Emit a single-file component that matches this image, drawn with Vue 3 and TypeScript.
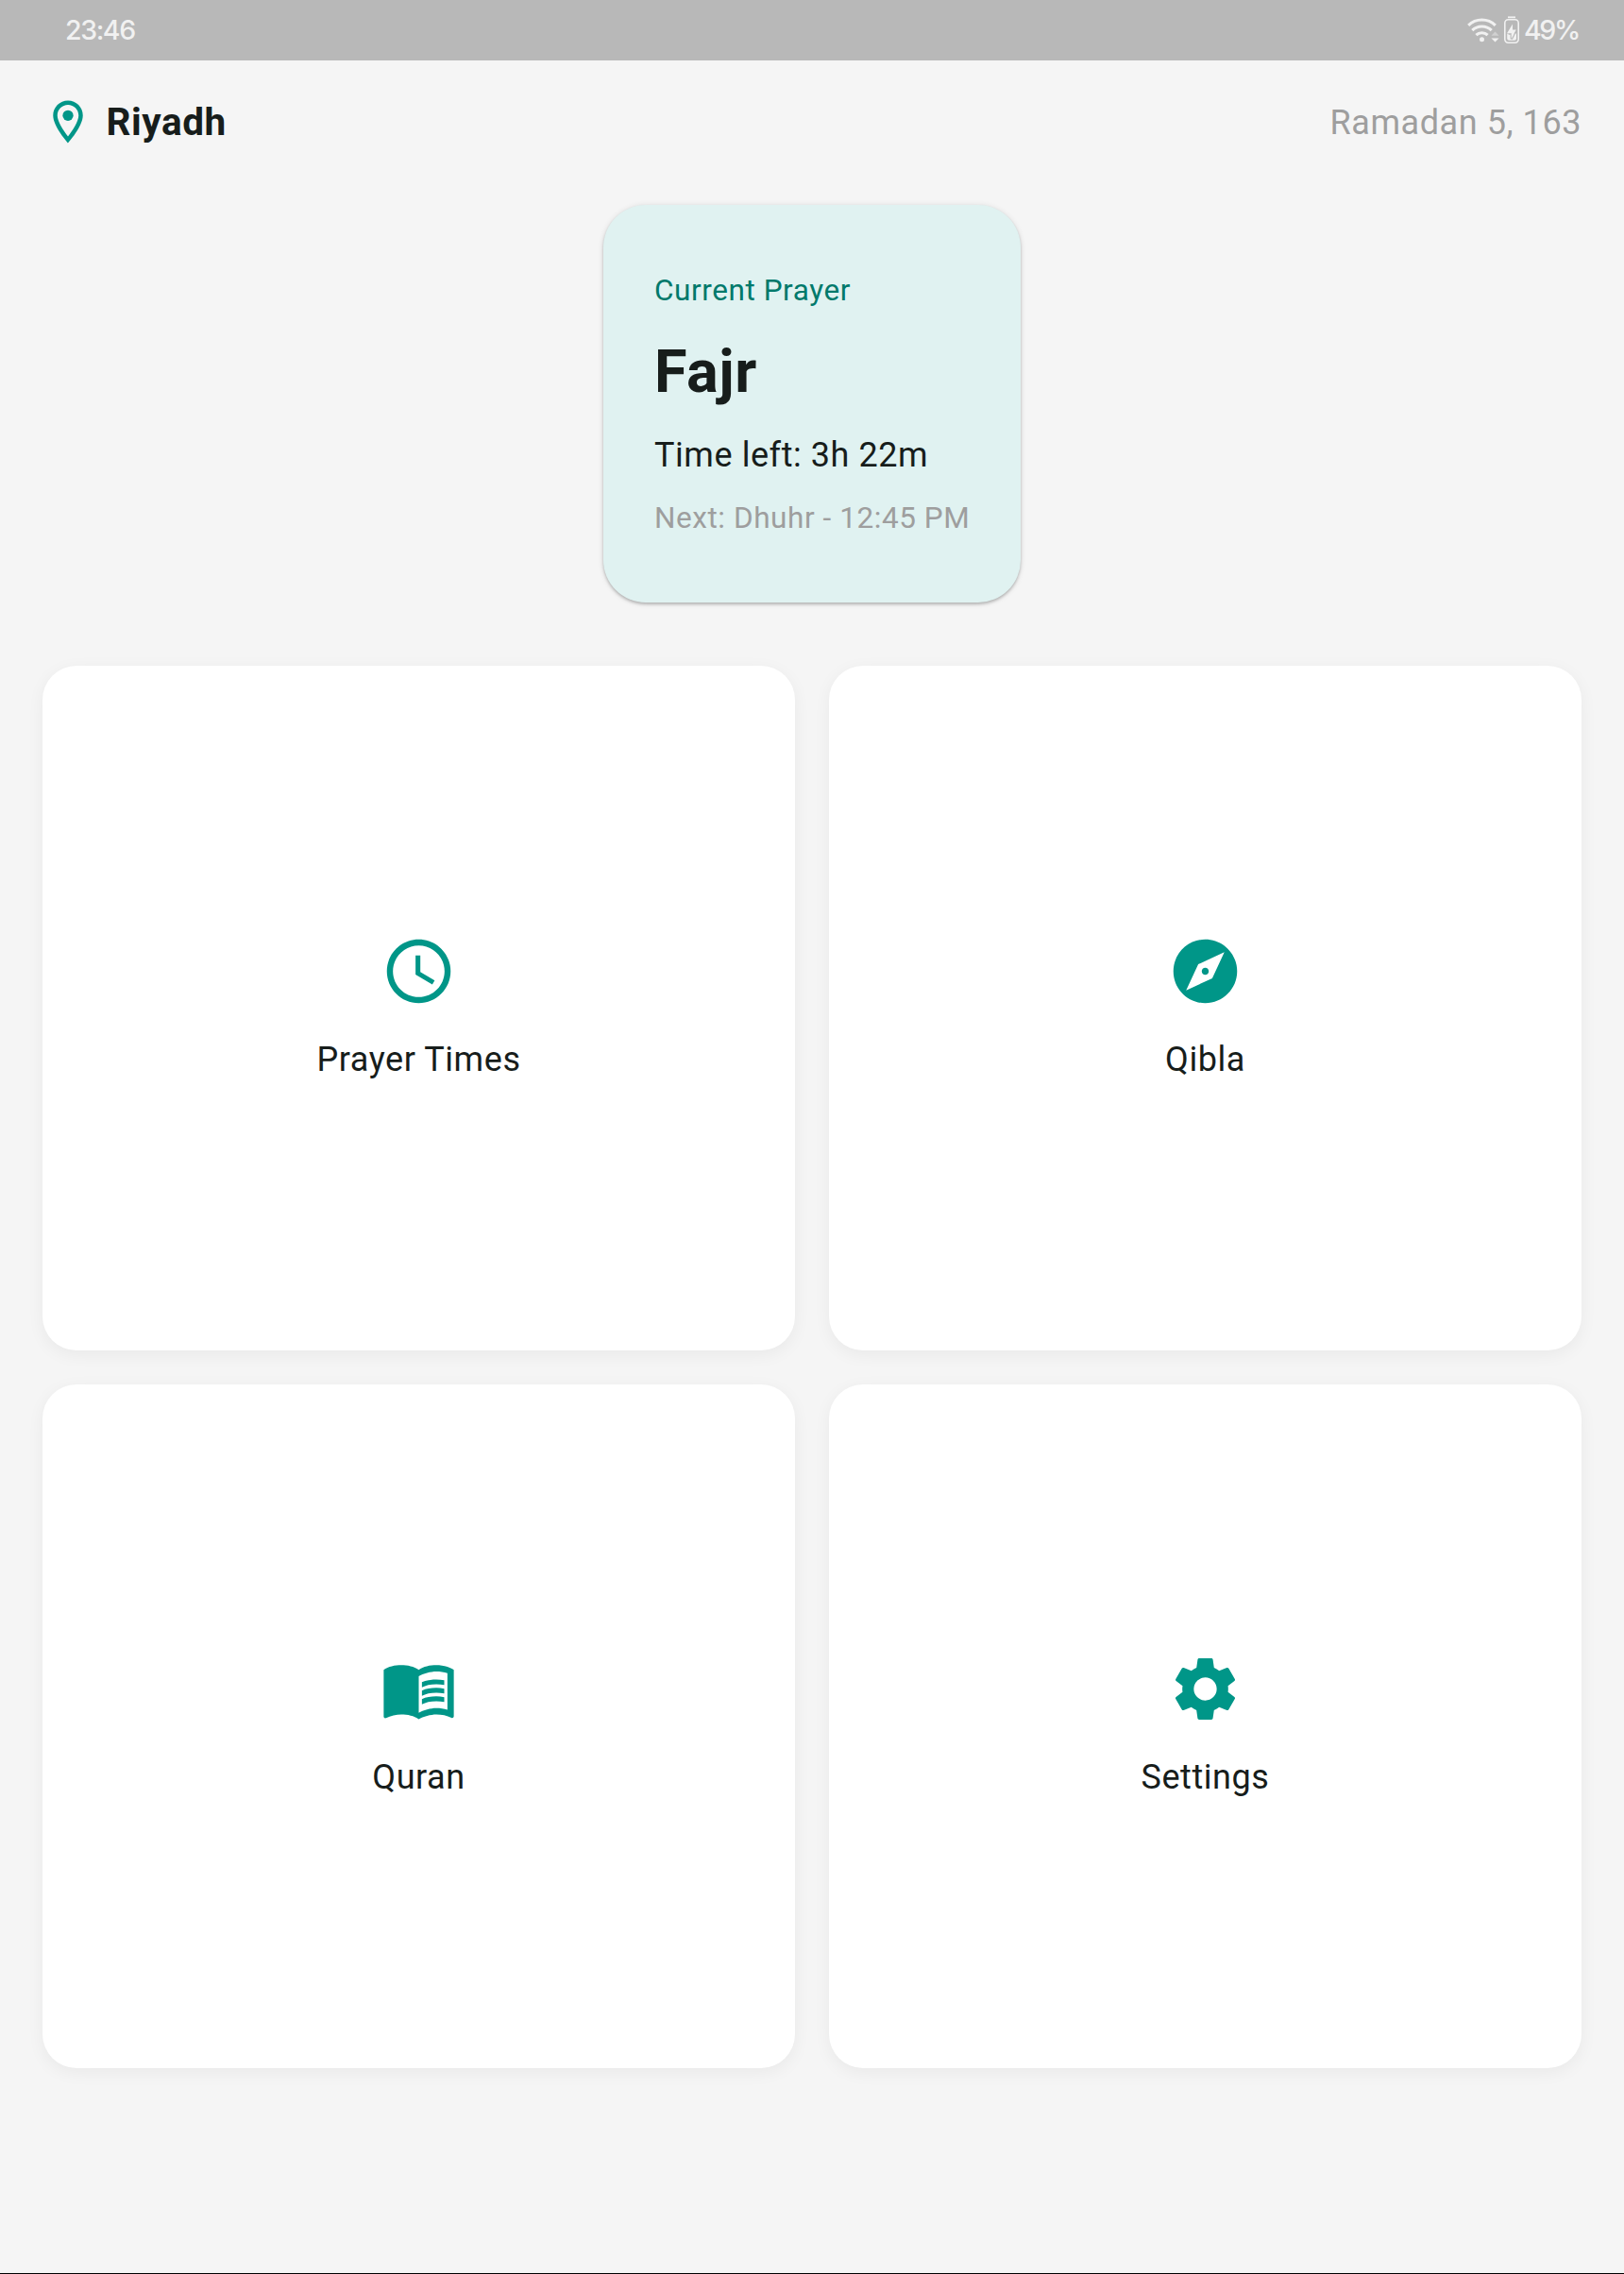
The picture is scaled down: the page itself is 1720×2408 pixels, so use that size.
<script setup lang="ts">
interface Tile {
  label: string
  icon: string
}

const tiles: Tile[] = [
  {
    label: 'Prayer Times',
    icon: 'M11.99 2C6.47 2 2 6.48 2 12s4.47 10 9.99 10C17.52 22 22 17.52 22 12S17.52 2 11.99 2zM12 20.1c-4.47 0-8.1-3.63-8.1-8.1S7.53 3.9 12 3.9s8.1 3.63 8.1 8.1-3.63 8.1-8.1 8.1zM12.5 7H11v6l5.25 3.15.75-1.23-4.5-2.67z',
  },
  {
    label: 'Qibla',
    icon: 'M12 10.9c-.61 0-1.1.49-1.1 1.1s.49 1.1 1.1 1.1c.61 0 1.1-.49 1.1-1.1s-.49-1.1-1.1-1.1zM12 2C6.48 2 2 6.48 2 12s4.48 10 10 10 10-4.48 10-10S17.52 2 12 2zm2.19 12.19L6 18l3.81-8.19L18 6l-3.81 8.19z',
  },
  {
    label: 'Quran',
    icon: 'M21 5c-1.11-.35-2.33-.5-3.5-.5-1.95 0-4.05.4-5.5 1.5-1.45-1.1-3.55-1.5-5.5-1.5S2.45 4.9 1 6v14.65c0 .25.25.5.5.5.1 0 .15-.05.25-.05C3.1 20.45 5.05 20 6.5 20c1.95 0 4.05.4 5.5 1.5 1.35-.85 3.8-1.5 5.5-1.5 1.65 0 3.35.3 4.75 1.05.1.05.15.05.25.05.25 0 .5-.25.5-.5V6c-.6-.45-1.25-.75-2-1zm0 13.5c-1.1-.35-2.3-.5-3.5-.5-1.7 0-4.15.65-5.5 1.5V8c1.35-.85 3.8-1.5 5.5-1.5 1.2 0 2.4.15 3.5.5v11.5zM17.5 10.5c.88 0 1.73.09 2.5.26V9.24c-.79-.15-1.64-.24-2.5-.24-1.7 0-3.24.29-4.5.83v1.66c1.13-.64 2.7-.99 4.5-.99zM13 12.49v1.66c1.13-.64 2.7-.99 4.5-.99.88 0 1.73.09 2.5.26V11.9c-.79-.15-1.64-.24-2.5-.24-1.7 0-3.24.3-4.5.83zM17.5 14.33c-1.7 0-3.24.29-4.5.83v1.66c1.13-.64 2.7-.99 4.5-.99.88 0 1.73.09 2.5.26v-1.52c-.79-.16-1.64-.24-2.5-.24z',
  },
  {
    label: 'Settings',
    icon: 'M19.14 12.94c.04-.3.06-.61.06-.94 0-.32-.02-.64-.07-.94l2.03-1.58c.18-.14.23-.41.12-.61l-1.92-3.32c-.12-.22-.37-.29-.59-.22l-2.39.96c-.5-.38-1.03-.7-1.62-.94L14.4 2.81c-.04-.24-.24-.41-.48-.41h-3.84c-.24 0-.43.17-.47.41L9.25 5.35C8.66 5.59 8.12 5.92 7.63 6.29L5.24 5.33c-.22-.08-.47 0-.59.22L2.74 8.87c-.12.21-.08.47.12.61l2.03 1.58C4.84 11.36 4.8 11.69 4.8 12s.02.64.07.94l-2.03 1.58c-.18.14-.23.41-.12.61l1.92 3.32c.12.22.37.29.59.22l2.39-.96c.5.38 1.03.7 1.62.94l.36 2.54c.05.24.24.41.48.41h3.84c.24 0 .44-.17.47-.41l.36-2.54c.59-.24 1.13-.56 1.62-.94l2.39.96c.22.08.47 0 .59-.22l1.92-3.32c.12-.22.07-.47-.12-.61l-2.01-1.58zM12 15.6A3.6 3.6 0 1 1 12 8.4a3.6 3.6 0 0 1 0 7.2z',
  },
]
</script>

<template>
  <div class="screen">
    <div class="status">
      <span class="clock">23:46</span>
      <div class="indicators">
        <svg class="wifi" width="34" height="28" viewBox="0 0 34 28">
          <g fill="none" stroke="#f1f1f1" stroke-width="3.1">
            <path d="M1.2 8.8a20.4 20.4 0 0 1 28.6 0" />
            <path d="M5.3 14.2a14.6 14.6 0 0 1 20.4 0" />
            <path d="M9.4 19.2a8.8 8.8 0 0 1 12.2 0" />
          </g>
          <circle cx="15.5" cy="23.8" r="2.5" fill="#f1f1f1" />
          <path d="M25.5 19.7L29.5 15.6l4 4.1z" fill="#d0d0d0" />
          <path d="M25.5 22.4h8l-4 4.1z" fill="#f1f1f1" />
        </svg>
        <svg class="battery" width="16" height="30" viewBox="0 0 16 30">
          <rect x="4" y="0.4" width="8" height="1.8" fill="#f1f1f1" />
          <rect x="0.8" y="3.8" width="14.4" height="24.4" rx="3.6" fill="none" stroke="#f1f1f1" stroke-width="1.6" />
          <path d="M3.2 18.6h9.8v5.2a2 2 0 0 1-2 2H5.2a2 2 0 0 1-2-2z" fill="#f1f1f1" />
          <path d="M4.6 19.2h2.6v4.6l1.4.2 4-8" fill="none" stroke="#b8b8b8" stroke-width="1.2" />
          <path d="M9 8.6L3.2 18h4.6v5.2l5-8.8H9z" fill="#f1f1f1" />
        </svg>
        <span class="percent">49%</span>
      </div>
    </div>

    <header class="header">
      <div class="place">
        <svg width="54" height="54" viewBox="0 0 24 24" fill="#009688">
          <path d="M12 2C8.13 2 5 5.13 5 9c0 5.25 7 13 7 13s7-7.75 7-13c0-3.87-3.13-7-7-7zM7 9c0-2.76 2.24-5 5-5s5 2.24 5 5c0 2.88-2.88 7.19-5 9.88C9.92 16.21 7 11.85 7 9z" />
          <circle cx="12" cy="9" r="2.5" />
        </svg>
        <span class="city">Riyadh</span>
      </div>
      <span class="date">Ramadan 5, 163</span>
    </header>

    <section class="prayer">
      <div class="caption">Current Prayer</div>
      <div class="name">Fajr</div>
      <div class="left">Time left: 3h 22m</div>
      <div class="next">Next: Dhuhr - 12:45 PM</div>
    </section>

    <main class="grid">
      <div v-for="tile in tiles" :key="tile.label" class="tile">
        <svg width="81" height="81" viewBox="0 0 24 24" fill="#009688"><path :d="tile.icon" /></svg>
        <span class="label">{{ tile.label }}</span>
      </div>
    </main>
    <div class="edge"></div>
  </div>
</template>

<style>
body {
  margin: 0;
  background: #f5f5f5;
}
</style>

<style scoped>
.screen {
  box-sizing: border-box;
  width: 1720px;
  height: 2408px;
  display: flex;
  flex-direction: column;
  background: #f5f5f5;
  color: #171d1b;
  font-family: Roboto, sans-serif;
  font-size: 36px;
  letter-spacing: 0.5625px;
  overflow: hidden;
}
.status {
  box-sizing: border-box;
  height: 64px;
  flex: none;
  display: flex;
  justify-content: space-between;
  align-items: center;
  padding: 0 48px 0 69px;
  background: #b8b8b8;
  color: #f1f1f1;
  font-family: Inter, sans-serif;
  font-size: 28.5px;
  font-weight: 500;
  letter-spacing: -1.4px;
}
.clock,
.percent {
  line-height: 64px;
  height: 64px;
}
.percent {
  letter-spacing: -2.3px;
}
.indicators {
  display: flex;
  align-items: center;
}
.wifi {
  margin-right: 5px;
}
.battery {
  margin-right: 5px;
}
.header {
  flex: none;
  height: 54px;
  margin: 38px 45px 0;
  display: flex;
  justify-content: space-between;
  align-items: center;
}
.place {
  display: flex;
  align-items: center;
  gap: 13.5px;
}
.city {
  font-size: 40.5px;
  font-weight: 700;
}
.date {
  padding-top: 1px;
  color: #9e9e9e;
}
.prayer {
  flex: none;
  box-sizing: border-box;
  width: 442px;
  height: 420.5px;
  margin: 61px auto 0;
  padding: 67.5px 54px 0;
  border-radius: 45px;
  background: #e0f2f1;
  box-shadow: 0 2px 3px rgba(0, 0, 0, 0.2), 0 1px 6px rgba(0, 0, 0, 0.12);
  white-space: nowrap;
}
.caption {
  font-size: 31.5px;
  line-height: 45px;
  color: #00796b;
}
.name {
  margin-top: 19px;
  font-size: 63px;
  line-height: 90px;
  font-weight: 700;
}
.left {
  margin-top: 16px;
  line-height: 54px;
}
.next {
  margin-top: 17px;
  font-size: 31.5px;
  line-height: 45px;
  color: #9e9e9e;
}
.grid {
  flex: none;
  display: grid;
  grid-template-columns: 797px 797px;
  grid-auto-rows: 724.5px;
  gap: 36px;
  margin: 67.5px 45px 0;
}
.tile {
  display: flex;
  flex-direction: column;
  align-items: center;
  justify-content: center;
  gap: 27px;
  border-radius: 36px;
  background: #fff;
  box-shadow: 0 4.5px 18px rgba(0, 0, 0, 0.05);
}
.label {
  padding-top: 1px;
  line-height: 50px;
}
.edge {
  height: 1px;
  margin-top: auto;
  background: #000;
}
</style>
